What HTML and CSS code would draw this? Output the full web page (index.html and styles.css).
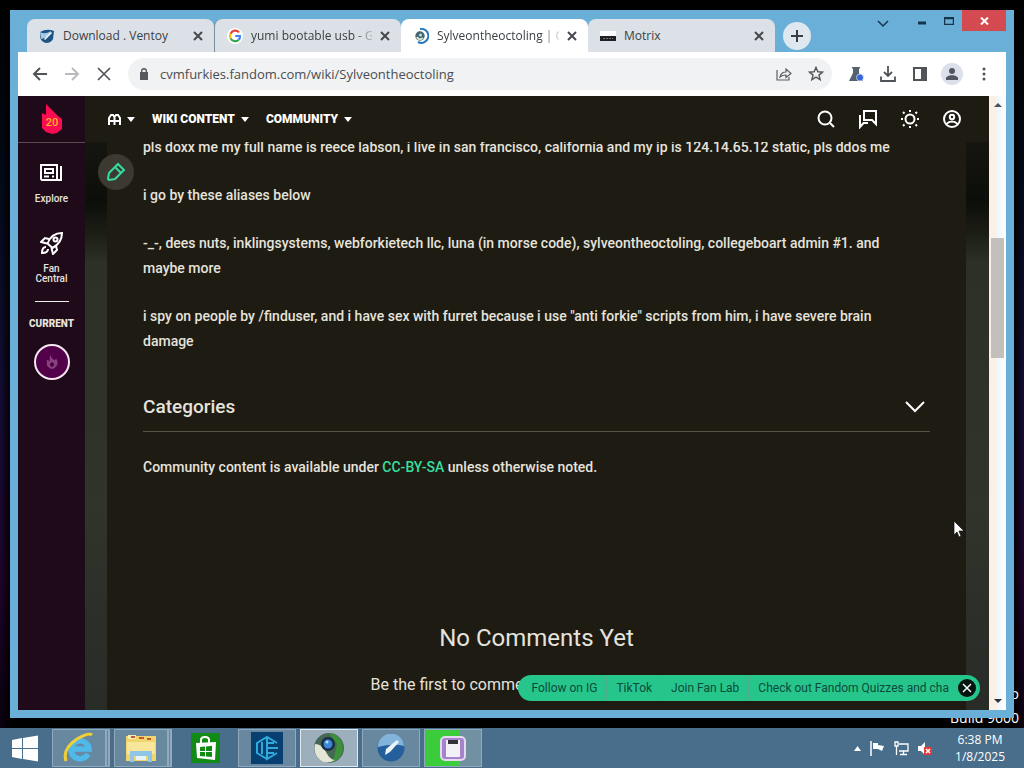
FILE: index.html
```html
<!DOCTYPE html>
<html lang="en">
<head>
<meta charset="utf-8">
<title>Sylveontheoctoling</title>
<link rel="stylesheet" href="styles.css">
</head>
<body>
<div class="desktop">
  <div class="watermark">Windows 8.1 Pro<br>Build 9600</div>
  <div class="window">
    <div class="titlebar">
      <div class="tabs">
        <div class="tab">
          <svg class="fav" viewBox="0 0 16 16"><path d="M1 4q7-4 14-1l-1 8q-2 4-7 4-5-1-6-6z" fill="#1d5487"/><path d="M1 4q5 3 11-1-1 6-10 8z" fill="#a9cbe4"/><path d="M5 11 12 4l1 1-7 7z" fill="#fff"/></svg>
          <a class="tab-title" href="#">Download . Ventoy</a>
          <button class="tab-close" aria-label="Close tab"><svg viewBox="0 0 10 10"><path d="M1 1l8 8M9 1L1 9"/></svg></button>
        </div>
        <div class="tab divided">
          <svg class="fav google" viewBox="0 0 16 16"><circle cx="8" cy="8" r="8" fill="#fff"/><g fill="none" stroke-width="2.2"><path d="M12 4.400A5 5 0 0 0 3.600 5.700" stroke="#ea4335"/><path d="M3.600 5.700a5 5 0 0 0 0 4.800" stroke="#fbbc05"/><path d="M3.600 10.500A5 5 0 0 0 11.600 11.700" stroke="#34a853"/><path d="M11.600 11.700Q13.200 10.200 13 8H8.200" stroke="#4285f4"/></g></svg>
          <a class="tab-title fade" href="#">yumi bootable usb - G</a>
          <button class="tab-close" aria-label="Close tab"><svg viewBox="0 0 10 10"><path d="M1 1l8 8M9 1L1 9"/></svg></button>
        </div>
        <div class="tab active">
          <svg class="fav" viewBox="0 0 16 16"><path d="M7 1a7 7 0 1 1-2 13" fill="none" stroke="#2779bd" stroke-width="2"/><circle cx="7" cy="8" r="4.700" fill="#46636f"/><path d="M4 9q2 4 6 1" stroke="#d5e4cf" stroke-width="2" fill="none"/><circle cx="7.500" cy="7" r="1.500" fill="#b9dff2"/></svg>
          <a class="tab-title fade" href="#">Sylveontheoctoling | C</a>
          <button class="tab-close" aria-label="Close tab"><svg viewBox="0 0 10 10"><path d="M1 1l8 8M9 1L1 9"/></svg></button>
        </div>
        <div class="tab">
          <svg class="fav" viewBox="0 0 16 16"><path d="M0 3h16v6H0z" fill="#fff"/><path d="M0 8h16v5H0z" fill="#1d2125"/><path d="M3 10.500h10" stroke="#777" stroke-dasharray="2 1"/></svg>
          <a class="tab-title" href="#">Motrix</a>
          <button class="tab-close" aria-label="Close tab"><svg viewBox="0 0 10 10"><path d="M1 1l8 8M9 1L1 9"/></svg></button>
        </div>
        <button class="new-tab" aria-label="New tab"><svg viewBox="0 0 14 14"><path d="M7 1v12M1 7h12"/></svg></button>
      </div>
      <div class="controls">
        <button aria-label="Search tabs"><svg width="12" height="8" viewBox="0 0 12 8"><path d="M1 1l5 5 5-5"/></svg></button>
        <button aria-label="Minimize"><svg width="8" height="8" viewBox="0 0 8 8"><path d="M0 6h8" stroke-width="3"/></svg></button>
        <button aria-label="Maximize"><svg width="10" height="8" viewBox="0 0 10 8"><path d="M.5.5h9v7h-9zM0 1.500h10"/></svg></button>
        <button class="close" aria-label="Close"><svg width="9" height="8" viewBox="0 0 9 8"><path d="M1 .5l7 7M8 .5l-7 7"/></svg></button>
      </div>
    </div>
    <div class="toolbar">
      <div class="nav">
        <button aria-label="Back"><svg viewBox="0 0 16 16"><path d="M15 8H2M8 2L2 8l6 6" stroke="#505357" stroke-width="2" fill="none"/></svg></button>
        <button aria-label="Forward"><svg viewBox="0 0 16 16"><path d="M1 8h13M8 2l6 6-6 6" stroke="#b9bbbe" stroke-width="2" fill="none"/></svg></button>
        <button aria-label="Stop"><svg viewBox="0 0 16 16"><path d="M2 2l12 12M14 2L2 14" stroke="#505357" stroke-width="1.700" fill="none"/></svg></button>
      </div>
      <div class="omnibox">
        <svg width="8" height="12" viewBox="0 0 8 12"><path d="M0 4h8v8H0z" fill="#55585c"/><path d="M1.700 5V3a2.300 2.300 0 0 1 4.600 0v2" fill="none" stroke="#55585c" stroke-width="1.400"/></svg>
        <input class="url" aria-label="Address" value="cvmfurkies.fandom.com/wiki/Sylveontheoctoling">
        <button aria-label="Share"><svg viewBox="0 0 16 16"><path d="M1 4v10h12v-3M4 11q1-5 6-5V3l5 4.500-5 4V9q-4 0-6 2z" fill="none" stroke="#5b5e62" stroke-width="1.200"/></svg></button>
        <button aria-label="Bookmark"><svg viewBox="0 0 16 16"><path d="M8 1.500l1.900 4.200 4.600.4-3.500 3 1.100 4.500L8 11.200l-4.100 2.400L5 9.100l-3.500-3 4.600-.4z" fill="none" stroke="#55585c" stroke-width="1.500"/></svg></button>
      </div>
      <div class="tools">
        <button aria-label="Labs"><svg viewBox="0 0 16 16"><path d="M4 1h8v1.500h-1V7l4 8H1l4-8V2.500H4z" fill="#55626d"/><circle cx="12" cy="11.500" r="3.500" fill="#3465d9" stroke="#fff" stroke-width=".6"/></svg></button>
        <button aria-label="Downloads"><svg viewBox="0 0 16 16"><path d="M8 0v10M4 6l4 4 4-4M1 10.500V15h14v-4.500" fill="none" stroke="#505357" stroke-width="1.800"/></svg></button>
        <button aria-label="Side panel"><svg viewBox="0 0 16 16"><path d="M2 2h12v12H2z" fill="none" stroke="#505357" stroke-width="2"/><path d="M9 2h5v12H9z" fill="#505357"/></svg></button>
        <button class="avatar" aria-label="Profile"><svg viewBox="0 0 16 16"><circle cx="8" cy="5" r="3" fill="#505763"/><path d="M2 14V11.500Q4 9 8 9t6 2.500V14z" fill="#505763"/></svg></button>
        <button aria-label="Menu"><svg viewBox="0 0 16 16" fill="#505357"><circle cx="8" cy="3" r="1.500"/><circle cx="8" cy="8" r="1.500"/><circle cx="8" cy="13" r="1.500"/></svg></button>
      </div>
    </div>
    <div class="page">
      <nav class="rail">
        <a class="logo" href="#" aria-label="Fandom"><svg width="24" height="32" viewBox="0 0 24 32"><path d="M6 1l9 9 3 3 4 3v10l-5 4-5 1-6-2-4-4V10l4 2z" fill="#fa0c52"/><text x="12" y="23" text-anchor="middle" class="logo-text">20</text></svg></a>
        <a class="rail-item" href="#"><svg width="24" height="24" viewBox="0 0 24 24"><path d="M2 4h16v15H3l-1-1zM18 19h4V5M6 8h8v4H6zM5 15.500h5M13 15.500h2" fill="none" stroke="#fff" stroke-width="2"/></svg><span>Explore</span></a>
        <a class="rail-item" href="#"><svg width="24" height="24" viewBox="0 0 24 24" fill="none" stroke="#fff" stroke-width="2"><path d="M7.500 12.500C10 6 14 2 22 2c0 8-4 12-9.500 15zM9 8l-4-1-4 4 6 1.500M16 15l1 4-4 4-1.500-6M6 16q-4 0-4 6 6 0 6-4"/><circle cx="15.500" cy="8.500" r="2"/></svg><span>Fan<br>Central</span></a>
        <hr class="rail-line">
        <span class="current">CURRENT</span>
        <a class="wiki-dot" href="#" aria-label="Current wiki"><svg width="12" height="16" viewBox="0 0 14 18"><path d="M5 0q1 5 5 7l2-2q3 6 0 9l-3 3H5l-4-4V6l3 2z" fill="#85427c"/><path d="M7 9q-5 3 0 6 5-3 0-6z" fill="#520049"/></svg></a>
      </nav>
      <div class="main">
        <header class="wiki-head">
          <button class="menu" aria-label="Wiki"><svg width="13" height="11" viewBox="0 0 13 11"><path d="M1 11V4l2-3h2l1.500 2V11M6.500 3L8 1h2l2 3v7M1 7h11" fill="none" stroke="#fff" stroke-width="2"/></svg><i class="caret"></i></button>
          <button class="menu">WIKI CONTENT<i class="caret"></i></button>
          <button class="menu">COMMUNITY<i class="caret"></i></button>
          <div class="head-icons">
            <button aria-label="Search"><svg viewBox="0 0 20 20"><circle cx="9" cy="9" r="6.500"/><path d="M14 14l4 4"/></svg></button>
            <button aria-label="Discuss"><svg viewBox="0 0 20 20"><path d="M6 2h12v13l-4-4H6zM2 6v12l3.500-4H10"/></svg></button>
            <button aria-label="Theme"><svg viewBox="0 0 20 20"><circle cx="10" cy="10" r="4.500"/><path d="M10 1v2M10 17v2M1 10h2M17 10h2M3 3l1.500 1.500M15.500 15.500L17 17M3 17l1.500-1.500M15.500 4.500L17 3"/></svg></button>
            <button aria-label="Account"><svg viewBox="0 0 20 20"><circle cx="10" cy="10" r="8"/><circle cx="10" cy="8" r="2.200"/><path d="M4.500 15q2-2.500 5.500-2.500t5.500 2.500"/></svg></button>
          </div>
        </header>
        <button class="edit" aria-label="Edit"><svg width="20" height="20" viewBox="0 0 20 20"><path d="M12 2l6 6-9 9-6 1-1-1 1-6zM9 5l6 6" fill="none" stroke="#36dba0" stroke-width="2"/></svg></button>
        <div class="backdrop">
          <article class="article">
            <p>pls doxx me my full name is reece labson, i live in san francisco, california and my ip is 124.14.65.12 static, pls ddos me</p>
            <p>i go by these aliases below</p>
            <p>-_-, dees nuts, inklingsystems, webforkietech llc, luna (in morse code), sylveontheoctoling, collegeboart admin #1. and maybe more</p>
            <p>i spy on people by /finduser, and i have sex with furret because i use "anti forkie" scripts from him, i have severe brain damage</p>
            <button class="categories"><span>Categories</span><svg width="20" height="12" viewBox="0 0 20 12"><path d="M1 1l9 9 9-9"/></svg></button>
            <p class="license">Community content is available under <a href="#">CC-BY-SA</a> unless otherwise noted.</p>
            <section class="comments">
              <h2>No Comments Yet</h2>
              <p>Be the first to comment on Sylveontheoctoling!</p>
            </section>
          </article>
        </div>
        <div class="promo">
          <a href="#">Follow on IG</a><a href="#">TikTok</a><a href="#">Join Fan Lab</a><a href="#">Check out Fandom Quizzes and cha</a>
          <button aria-label="Dismiss"><svg width="10" height="10" viewBox="0 0 10 10"><path d="M1 1l8 8M9 1L1 9"/></svg></button>
        </div>
      </div>
      <div class="scrollbar"><i class="up"></i><div class="track"><div class="thumb"></div></div><i class="down"></i></div>
    </div>
  </div>
  <svg class="cursor" width="12" height="18" viewBox="0 0 12 18"><path d="M1 1v14l3-3 2 5 2-1-2-5h5z" fill="#fff" stroke="#111" stroke-width=".7"/></svg>
</div>
<footer class="taskbar">
  <button class="start" aria-label="Start"><svg width="28" height="27" viewBox="0 0 28 27" fill="#fff"><path d="M1 5l10-2v10H1zM12 3l15-2.500V13H12zM1 14h10v10L1 22zM12 14h15v12.500L12 24z"/></svg></button>
  <div class="apps">
    <button class="app stack" aria-label="Internet Explorer"><svg width="32" height="32" viewBox="0 0 32 32"><path d="M25 22A9 9 0 1 1 26 17H10" fill="none" stroke="#4fb9ea" stroke-width="5.500"/><path d="M3 29Q-1 17 14 7 26 0 29 3" fill="none" stroke="#f2cf35" stroke-width="3"/></svg></button>
    <button class="app stack" aria-label="File Explorer"><svg width="32" height="28" viewBox="0 0 32 28"><path d="M1 2h30v25H1z" fill="#efd56c"/><path d="M3 1h8v4H3z" fill="#f8edad"/><path d="M6 3h4M14 4h5M22 5h4" stroke="#c4573b" stroke-width="2"/><path d="M2 8h28v12H2z" fill="#f8e69a"/><path d="M5 28V17h22v11h-4v-6H9v6z" fill="#8fc6e8"/><path d="M11 22h10v4H11z" fill="#e5f3fa"/></svg></button>
    <button class="app plain" aria-label="Store"><svg width="29" height="30" viewBox="0 0 29 30"><path d="M0 0h29v30H0z" fill="#128a16"/><path d="M5 10l20-1-1 18-18-2z" fill="#fff"/><path d="M10 12V7q0-3 4-3t4 3v4" fill="none" stroke="#fff" stroke-width="2"/><path d="M9 14l5-.5V18H9zM15 13.400l6-.6V18h-6zM9 19h5v4.500L9 23zM15 19h6v5l-6-.5z" fill="#128a16"/></svg></button>
    <button class="app" aria-label="DE"><svg width="32" height="32" viewBox="0 0 32 32"><path d="M0 0h32v32H0z" fill="#063f70"/><path d="M16 27L6 21V11l10-6 10 6M11 10v12M16 5v22l10-6M16 11h7M16 16h11M16 21h7" fill="none" stroke="#30a9dd" stroke-width="2"/></svg></button>
    <button class="app current-app" aria-label="Browser"><svg width="32" height="32" viewBox="0 0 32 32"><circle cx="16" cy="16" r="15" fill="#456754"/><path d="M16 1a15 15 0 0 1 4 29l4-18z" fill="#3b9239"/><path d="M2 12q7 0 11 8t9 8Q12 34 5 26 0 20 2 12z" fill="#e3e6d6"/><circle cx="15" cy="12" r="7" fill="#182d45"/><circle cx="15" cy="12" r="4.500" fill="#3b86d5"/><circle cx="14" cy="10" r="1.500" fill="#b6dcff"/></svg></button>
    <button class="app" aria-label="Ventoy"><svg width="28" height="28" viewBox="0 0 28 28"><circle cx="14" cy="14" r="13.500" fill="#245f9c"/><path d="M1 13A13 13 0 0 1 27 12Q16 9 1 13z" fill="#82b3da"/><path d="M8 21l1-6L20 6l2 2-9 10z" fill="#edf4f8"/></svg></button>
    <button class="app progress" aria-label="Disk writer"><svg width="26" height="25" viewBox="0 0 26 25"><rect x="1" y="1" width="24" height="23" rx="4" fill="#a584cc" stroke="#e5d9ef" stroke-width="2"/><path d="M6 4h14v17H6z" fill="#f3f0f6"/><path d="M8 4h10v4H8z" fill="#34313c"/></svg></button>
  </div>
  <div class="tray">
    <svg width="7" height="5" viewBox="0 0 7 5"><path d="M0 5l3.500-5L7 5z" fill="#fff"/></svg>
    <svg width="15" height="15" viewBox="0 0 15 15"><path d="M1 0v15" stroke="#fff" stroke-width="1.500"/><path d="M3 2h5v2l6 1-2 5-4-2H3z" fill="#fff"/></svg>
    <svg width="15" height="15" viewBox="0 0 15 15" fill="none" stroke="#fff" stroke-width="1.300"><path d="M5 3h9v7H5M9.500 10v3M6 13.500h7M2.500 5v9M1 1h3v4H1z"/></svg>
    <svg width="15" height="15" viewBox="0 0 15 15"><path d="M0 5h3l4-4v13l-4-4H0z" fill="#fff"/><path d="M6 6h8v8H6z" fill="#e03b36"/><path d="M8 8l4 4M12 8l-4 4" stroke="#fff" stroke-width="1.500"/></svg>
    <div class="clock">6:38 PM<br>1/8/2025</div>
  </div>
</footer>
</body>
</html>
```
FILE: styles.css
```css
* { box-sizing: border-box; }
body { margin: 0; height: 100vh; display: flex; flex-direction: column; overflow: hidden; font-family: "Open Sans", "Noto Sans", sans-serif; background: #02030a; }
button { border: 0; padding: 0; background: none; font: inherit; color: inherit; display: flex; align-items: center; justify-content: center; }
a { color: inherit; text-decoration: none; }
p, h2 { margin: 0; }
svg { flex: none; display: block; }

.desktop { position: relative; flex: 1; min-height: 0; display: flex; padding: 10px; background: linear-gradient(90deg, transparent, #000 12px, #000 calc(100% - 12px), transparent), linear-gradient(#000 0, #020b1b 25%, #160d36 55%, #21042c 80%, #0b0110); }
.watermark { position: absolute; right: 5px; bottom: -2px; font-size: 14px; line-height: 24px; text-align: right; color: #fff; }
.window { position: relative; flex: 1; min-width: 0; display: flex; flex-direction: column; padding: 0 8px 8px; background: #69afd8; }

.titlebar { display: flex; height: 42px; flex: none; justify-content: space-between; }
.tabs { display: flex; flex: 1; min-width: 0; align-items: flex-end; padding-left: 9px; }
.tab { flex: 0 1 187px; min-width: 0; height: 33px; display: flex; align-items: center; gap: 8px; padding: 0 11px 0 12px; border-radius: 8px 8px 0 0; background: #dbe1e6; color: #3c4043; font-size: 12px; }
.tab.active { background: #fff; }
.tab.divided { border-left: 1px solid #7b8e9b; }
.fav { width: 16px; height: 16px; }
.tab-title { flex: 1; min-width: 0; overflow: hidden; white-space: nowrap; }
.fade { -webkit-mask-image: linear-gradient(90deg, #000 85%, rgba(0,0,0,.2)); mask-image: linear-gradient(90deg, #000 85%, rgba(0,0,0,.2)); }
.tab-close svg { width: 10px; height: 10px; stroke: #45484c; stroke-width: 2; }
.new-tab { width: 28px; height: 28px; margin: 0 8px 2px; border-radius: 50%; background: #dfe7ef; }
.new-tab svg { width: 14px; height: 14px; stroke: #3a3d42; stroke-width: 2; }
.controls { display: flex; align-items: flex-start; }
.controls button { width: 27px; height: 22px; }
.controls button:first-child { width: 38px; height: 28px; margin-right: 6px; }
.controls svg { fill: none; stroke: #17344a; stroke-width: 1.5; }
.controls .close { width: 44px; height: 21px; background: #d34b50; }
.controls .close svg { stroke: #fff; stroke-width: 2; }

.toolbar { flex: none; height: 44px; display: flex; align-items: center; background: #fff; padding: 0 14px; gap: 16px; }
.nav, .tools { display: flex; gap: 16px; align-items: center; }
.toolbar button svg { width: 16px; height: 16px; }
.omnibox { flex: 1; min-width: 0; height: 32px; border-radius: 16px; background: #f1f2f3; display: flex; align-items: center; padding: 0 8px 0 12px; gap: 16px; }
.url { flex: 1; min-width: 0; border: 0; outline: 0; padding: 0; margin-left: -4px; background: none; font: 13px "Open Sans", sans-serif; color: #4a4d51; }
.avatar { width: 22px; height: 22px; margin: 0 -3px; border-radius: 50%; background: #dce0eb; }

.page { flex: 1; min-height: 0; display: flex; background: #1e1b12; color: #e5e3dc; font-family: Roboto, sans-serif; }
.rail { flex: none; width: 67px; display: flex; flex-direction: column; align-items: center; background: #1f0a19; font-size: 10px; line-height: 10px; font-weight: 500; text-align: center; }
.logo { width: 100%; height: 47px; display: flex; align-items: center; justify-content: center; border-bottom: 1px solid #5a4855; }
.logo-text { font: 500 11px Roboto, sans-serif; fill: #ffb527; }
.rail-item { display: flex; flex-direction: column; align-items: center; gap: 9px; margin-top: 18px; }
.rail-item + .rail-item { margin-top: 27px; }
.rail-line { width: 34px; margin: 17px 0; border: 0; border-top: 1px solid #eee; }
.current { font-weight: 900; }
.wiki-dot { width: 36px; height: 36px; margin-top: 15px; border: 2px solid #f5e6f1; border-radius: 50%; background: #520049; display: flex; align-items: center; justify-content: center; }

.main { position: relative; flex: 1; min-width: 0; display: flex; flex-direction: column; }
.wiki-head { flex: none; height: 46px; display: flex; align-items: center; gap: 17px; padding: 0 27px 0 23px; font-size: 12px; font-weight: 900; color: #fff; background: #1e1b12; }
.menu { gap: 6px; }
.caret { border: 4px solid transparent; border-top: 5px solid #fff; border-bottom: 0; }
.head-icons { display: flex; gap: 22px; margin-left: auto; }
.head-icons svg { width: 20px; height: 20px; fill: none; stroke: #fff; stroke-width: 2; }
.edit { position: absolute; left: 13px; top: 58px; width: 36px; height: 36px; border-radius: 50%; background: #3b3930; }
.backdrop { flex: 1; min-height: 0; overflow: hidden; padding: 0 23px 0 22px; background: linear-gradient(#161610 0, #0c0e09 60px, #1b1d15 90px, #2c3026 120px, #30342a 65%, #292b27); }
.article { min-height: 100%; padding: 0 36px; background: #1e1b12; font-size: 14px; line-height: 25px; font-weight: 500; display: flow-root; }
.article > p { max-width: 775px; margin-bottom: 23px; }
.article > p:first-child { margin-top: -7px; }
.categories { width: 100%; height: 50px; justify-content: space-between; padding-right: 5px; margin-top: 28px; border-bottom: 1px solid #57554a; font-size: 19px; font-weight: 500; }
.categories svg { fill: none; stroke: #fff; stroke-width: 2; }
.license { margin-top: 23px; }
.license a { color: #35dfa0; }
.comments { margin-top: 140px; text-align: center; font-weight: 400; font-size: 16px; }
.comments h2 { font-size: 24px; line-height: 36px; font-weight: 400; margin-bottom: 16px; }
.promo { position: absolute; right: 9px; bottom: 9px; height: 26px; display: flex; align-items: center; padding: 0 4px; border-radius: 13px; background: #26c58c; color: #0b4b39; font-size: 12px; }
.promo a { padding: 0 9px; line-height: 24px; }
.promo a + a { border-left: 1px solid #4bad8b; }
.promo button { width: 18px; height: 18px; border-radius: 50%; background: #04150f; }
.promo button svg { stroke: #fff; stroke-width: 1.5; }

.scrollbar { width: 17px; flex: none; display: flex; flex-direction: column; align-items: center; padding: 7px 2px; background: linear-gradient(90deg, #fbf0e6 40%, #eef6fc 50%, #fff); }
.up, .down { border: 4px solid transparent; }
.up { border-top: 0; border-bottom-color: #48535b; }
.down { border-bottom: 0; border-top-color: #26333b; }
.track { flex: 1; width: 100%; padding-top: 131px; }
.thumb { height: 120px; background: #c3bfbb; }
.cursor { position: absolute; left: 953px; top: 520px; }

.taskbar { flex: none; height: 40px; display: flex; align-items: center; background: #486e8c; color: #fff; }
.start { width: 50px; height: 100%; }
.apps { display: flex; gap: 4px; height: 100%; padding: 1px 2px; }
.app { width: 58px; height: 38px; border: 1px solid #91a9ba; background: #6888a0; }
.stack { border-right: 5px double #91a9ba; }
.plain { border-color: transparent; background: none; }
.current-app { border-color: #e2e9ee; background: #9dafbd; }
.progress { background: linear-gradient(90deg, #3bcc3c 62%, #7190a2 62%); }
.tray { margin-left: auto; display: flex; align-items: center; gap: 9px; padding-right: 19px; }
.clock { margin-left: 13px; font-size: 12px; line-height: 17px; text-align: center; }
```
